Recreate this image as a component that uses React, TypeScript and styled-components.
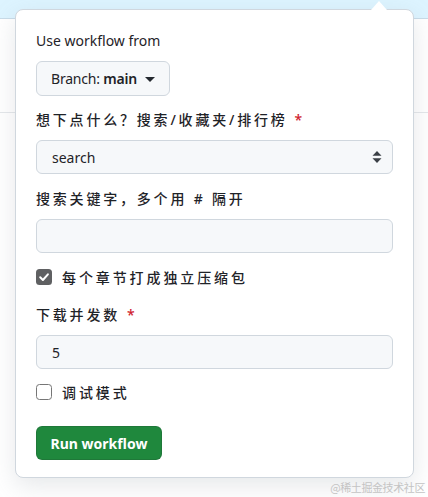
import React from "react";
import styled, { createGlobalStyle } from "styled-components";

const Global = createGlobalStyle`
  html, body { margin: 0; padding: 0; background: #ffffff; }
  body {
    font-family: "Noto Sans", "Noto Sans CJK SC", sans-serif;
    color: #1f2328;
    width: 428px;
    height: 497px;
    overflow: hidden;
  }
`;

const Page = styled.div`
  position: relative;
  width: 428px;
  height: 497px;
  background: #ffffff;
  overflow: hidden;
`;

const TopBand = styled.div`
  height: 18px;
  background: #ddf4ff;
  border-bottom: 1px solid #c8dbe8;
`;

const BehindRow = styled.div`
  height: 93px;
  border-bottom: 1px solid #e4e7ea;
`;

const Popover = styled.div`
  position: absolute;
  left: 15px;
  top: 9px;
  width: 399px;
  box-sizing: border-box;
  background: #ffffff;
  border: 1px solid #d0d7de;
  border-radius: 8px;
  box-shadow: 0 8px 24px rgba(140, 149, 159, 0.22);
  padding: 21px 20px 17px 20px;
  display: flex;
  flex-direction: column;

  &::before {
    content: "";
    position: absolute;
    top: -9px;
    right: 26px;
    border-left: 8px solid transparent;
    border-right: 8px solid transparent;
    border-bottom: 9px solid #ffffff;
  }
`;

const Title = styled.div`
  font-size: 14px;
  line-height: 20px;
  color: #1f2328;
  margin-bottom: 10px;
`;

const BranchButton = styled.button`
  align-self: flex-start;
  height: 35px;
  width: 134px;
  box-sizing: border-box;
  display: flex;
  align-items: center;
  justify-content: center;
  gap: 8px;
  background: #f6f8fa;
  border: 1px solid #d0d7de;
  border-radius: 6px;
  font-family: "Noto Sans", sans-serif;
  font-size: 14px;
  letter-spacing: -0.2px;
  white-space: nowrap;
  color: #1f2328;
  padding: 0 6px;
  b { font-weight: 600; }
`;

const Caret = styled.span`
  width: 0;
  height: 0;
  border-left: 5px solid transparent;
  border-right: 5px solid transparent;
  border-top: 5px solid #24292f;
  margin-top: 1px;
`;

const Field = styled.div<{ $mt: number }>`
  display: flex;
  flex-direction: column;
  gap: 10px;
  margin-top: ${(p) => p.$mt}px;
`;

const Label = styled.div`
  font-size: 14px;
  line-height: 20px;
  letter-spacing: 2.8px;
  color: #1f2328;
  font-weight: 500;
`;

const Required = styled.span`
  color: #cf222e;
  margin-left: 7px;
`;

const Control = styled.div`
  height: 34px;
  box-sizing: border-box;
  display: flex;
  align-items: center;
  justify-content: space-between;
  padding: 0 10px 0 15px;
  background: #f6f8fa;
  border: 1px solid #d0d7de;
  border-radius: 6px;
  font-size: 14px;
  color: #1f2328;
`;

const CheckRow = styled.label<{ $mt: number }>`
  display: flex;
  align-items: center;
  gap: 10px;
  height: 22px;
  margin-top: ${(p) => p.$mt}px;
  font-size: 14px;
  letter-spacing: 2.9px;
  color: #1f2328;
  font-weight: 500;
`;

const Box = styled.span<{ $checked: boolean }>`
  width: 16px;
  height: 16px;
  box-sizing: border-box;
  border-radius: 3.5px;
  border: ${(p) => (p.$checked ? "none" : "1.5px solid #767676")};
  background: ${(p) => (p.$checked ? "#5f6062" : "#ffffff")};
  display: flex;
  align-items: center;
  justify-content: center;
`;

const RunButton = styled.button`
  align-self: flex-start;
  margin-top: 23px;
  height: 34px;
  width: 126px;
  background: #1f883d;
  border: 1px solid rgba(31, 35, 40, 0.15);
  border-radius: 6px;
  color: #ffffff;
  font-family: "Noto Sans", sans-serif;
  font-weight: 700;
  font-size: 14px;
  padding: 0;
`;

const Watermark = styled.div`
  position: absolute;
  right: 3px;
  bottom: 2px;
  font-family: "Noto Sans CJK SC", sans-serif;
  font-size: 11px;
  color: #c4c4c4;
  letter-spacing: -0.4px;
`;

function Check({ checked }: { checked: boolean }) {
  return (
    <Box $checked={checked}>
      {checked && (
        <svg width="12" height="12" viewBox="0 0 12 12">
          <path d="M2.2 6.3 L4.9 9 L9.9 3.3" fill="none" stroke="#ffffff" strokeWidth="2" strokeLinecap="round" strokeLinejoin="round" />
        </svg>
      )}
    </Box>
  );
}

function UpDown() {
  return (
    <svg width="10" height="14" viewBox="0 0 10 14">
      <path d="M5 1 L9.5 5.8 L0.5 5.8 Z" fill="#3b4046" />
      <path d="M5 13 L9.5 8.2 L0.5 8.2 Z" fill="#3b4046" />
    </svg>
  );
}

export default function App() {
  return (
    <Page>
      <Global />
      <TopBand />
      <BehindRow />
      <Popover>
        <Title>Use workflow from</Title>
        <BranchButton>
          <span>
            Branch: <b>main</b>
          </span>
          <Caret />
        </BranchButton>
        <Field $mt={14}>
          <Label>
            想下点什么？搜索/收藏夹/排行榜<Required>*</Required>
          </Label>
          <Control>
            <span>search</span>
            <UpDown />
          </Control>
        </Field>
        <Field $mt={15}>
          <Label>搜索关键字，多个用 # 隔开</Label>
          <Control />
        </Field>
        <CheckRow $mt={13}>
          <Check checked />
          每个章节打成独立压缩包
        </CheckRow>
        <Field $mt={17}>
          <Label>
            下载并发数<Required>*</Required>
          </Label>
          <Control>
            <span>5</span>
          </Control>
        </Field>
        <CheckRow $mt={12}>
          <Check checked={false} />
          调试模式
        </CheckRow>
        <RunButton>Run workflow</RunButton>
      </Popover>
      <Watermark>@稀土掘金技术社区</Watermark>
    </Page>
  );
}
